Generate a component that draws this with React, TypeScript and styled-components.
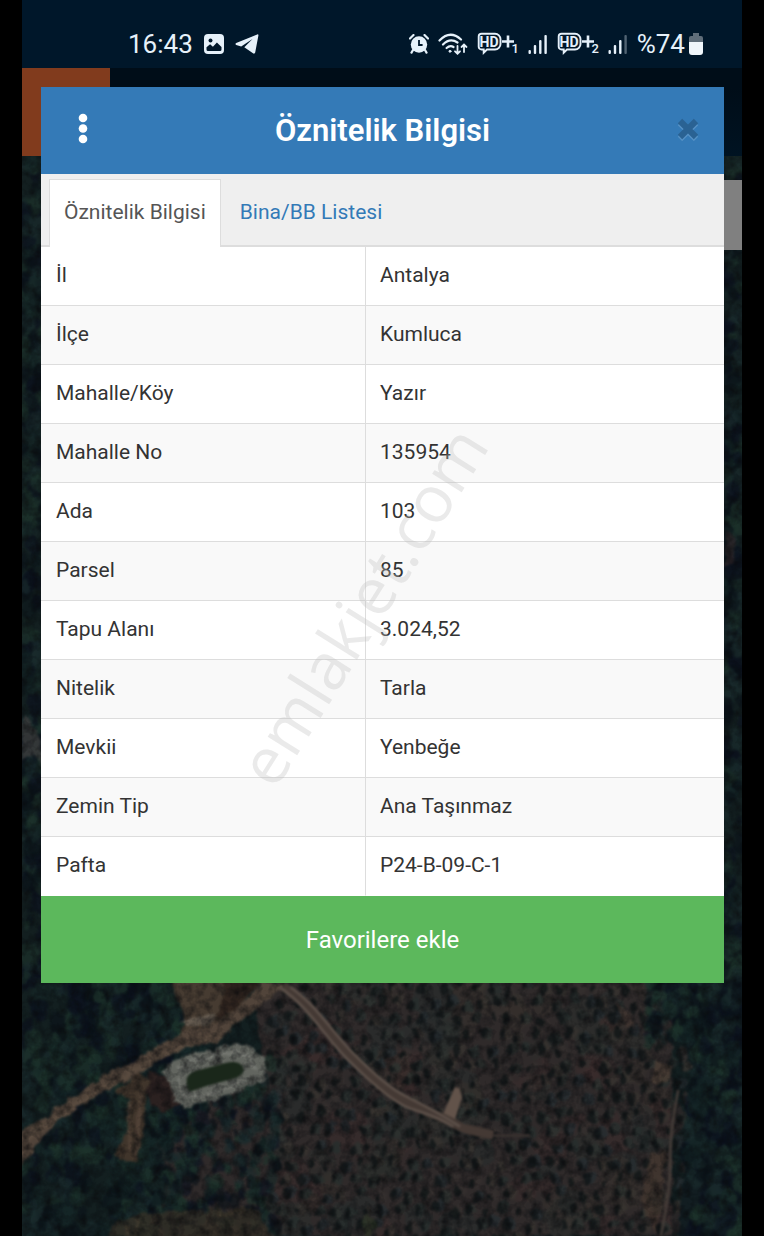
import React, { useState } from "react";
import styled, { createGlobalStyle } from "styled-components";

const GlobalStyle = createGlobalStyle`
  *, *::before, *::after { box-sizing: border-box; }
  body {
    margin: 0;
    background: #000;
    font-family: Roboto, "Liberation Sans", sans-serif;
    color: #333;
  }
  button { font: inherit; border: 0; margin: 0; cursor: pointer; }
`;

const Screen = styled.div`
  position: relative;
  display: flex;
  flex-direction: column;
  min-height: 100vh;
  padding: 0 22px;
  overflow: hidden;
`;

const StatusBar = styled.header`
  display: flex;
  justify-content: space-between;
  align-items: center;
  height: 68px;
  padding: 20px 38px 0 106px;
  background: #00172a;
  color: #e6f1fa;
  font-size: 26px;
  line-height: 32px;
`;

const StatusGroup = styled.div<{ $gap: number }>`
  display: flex;
  align-items: center;
  gap: ${(p) => p.$gap}px;

  svg { display: block; flex: none; }
`;

const Stage = styled.main`
  flex: 1;
  display: grid;
  grid-template-columns: minmax(0, 1fr);
`;

const Backdrop = styled.div`
  grid-area: 1 / 1;
  display: flex;
  flex-direction: column;
`;

const AppHeader = styled.div`
  height: 88px;
  background: linear-gradient(#000d18 0 20px, #001322 100%);
`;

const HeaderTile = styled.div`
  width: 88px;
  height: 88px;
  background: #813b1d;
`;

const MapArea = styled.div`
  position: relative;
  flex: 1;
  background: #0d1719;
  overflow: hidden;
`;

const MapDrawing = styled.svg`
  position: absolute;
  inset: 0;
  width: 100%;
  height: 100%;
`;

const MapControl = styled.div`
  position: absolute;
  top: 24px;
  right: 0;
  width: 70px;
  height: 70px;
  background: #808080;
`;

const Dialog = styled.section`
  grid-area: 1 / 1;
  align-self: start;
  position: relative;
  margin: 19px 18px 24px 19px;
  background: #fff;
`;

const DialogHeader = styled.div`
  display: grid;
  grid-template-columns: 84px 1fr 84px;
  align-items: center;
  height: 87px;
  background: #347ab7;
  color: #fff;
`;

const DialogTitle = styled.h1`
  margin: 0;
  font-size: 31px;
  line-height: 40px;
  font-weight: 600;
  text-align: center;
`;

const IconButton = styled.button<{ $align: "center" | "flex-end" }>`
  display: flex;
  justify-content: ${(p) => p.$align};
  align-items: center;
  height: 100%;
  padding: 0 0 4px;
  padding-right: ${(p) => (p.$align === "center" ? 0 : 25)}px;
  background: none;
  color: inherit;
`;

const Tabs = styled.div`
  display: flex;
  gap: 4px;
  height: 73px;
  padding: 5px 8px 0;
  background: #efefef;
  border-bottom: 2px solid #ddd;
`;

const Tab = styled.button<{ $active: boolean }>`
  padding: 0 14px ${(p) => (p.$active ? 4 : 2)}px;
  margin-bottom: ${(p) => (p.$active ? "-2px" : "0")};
  border: 1px solid ${(p) => (p.$active ? "#ddd" : "transparent")};
  border-bottom: 0;
  background: ${(p) => (p.$active ? "#fff" : "transparent")};
  color: ${(p) => (p.$active ? "#555" : "#337ab7")};
  font-size: 21px;
  line-height: 30px;
`;

const DataTable = styled.table`
  width: 100%;
  border-collapse: separate;
  border-spacing: 0;
  table-layout: fixed;
  font-size: 21px;
  line-height: 30px;
`;

const Row = styled.tr`
  height: 59px;

  &:nth-child(even) { background: #f9f9f9; }
  &:last-child > * { border-bottom-color: #fff; }
`;

const NameCell = styled.th`
  width: 325px;
  padding: 0 14px 2px 15px;
  border-right: 1px solid #ddd;
  border-bottom: 1px solid #ddd;
  font-weight: 400;
  text-align: left;

  @media (max-width: 700px) { width: 48%; }
`;

const ValueCell = styled.td`
  padding: 0 14px 2px;
  border-bottom: 1px solid #ddd;
`;

const FavoriteButton = styled.button`
  display: block;
  width: 100%;
  height: 87px;
  background: #5cb85c;
  color: #fff;
  font-size: 24px;
  line-height: 32px;
`;

const Watermark = styled.div`
  position: absolute;
  top: 50%;
  left: 50%;
  padding-bottom: 48px;
  transform: translate(-50%, -50%) rotate(-58deg);
  font-family: "Open Sans", sans-serif;
  font-size: 65px;
  line-height: 80px;
  white-space: nowrap;
  color: rgba(190, 190, 190, 0.32);
  pointer-events: none;
`;

const PhotoIcon = () => (
  <svg width="20" height="20" viewBox="0 0 20 20" aria-hidden="true">
    <rect width="20" height="20" rx="4" fill="#e6f1fa" />
    <circle cx="6.5" cy="6.5" r="2" fill="#00172a" />
    <path d="M2.5 15.5v-2.2l3.6-3 2.8 2.4 4-4.2 4.6 4.4v2.6q0 1.5-1.5 1.5H4q-1.5 0-1.5-1.5z" fill="#00172a" />
  </svg>
);

const TelegramIcon = () => (
  <svg width="24" height="20" viewBox="0 0 24 20" aria-hidden="true">
    <path
      d="M22.3.4 1.2 9.1c-1 .4-1 1.5 0 1.8l5 1.6L17.5 5 9.3 13.3l8.7 6c1 .7 1.9.3 2.2-.8L23.4 1.6c.2-1-.3-1.5-1.1-1.2z"
      fill="#e6f1fa"
    />
  </svg>
);

const AlarmIcon = () => (
  <svg width="20" height="20" viewBox="0 0 20 20" aria-hidden="true">
    <circle cx="10" cy="10.5" r="8.2" fill="#e6f1fa" />
    <path d="M1 4.5 4.5 1M19 4.5 15.5 1M4 16l-1.500 2.600M16 16l1.500 2.600" stroke="#e6f1fa" strokeWidth="2.200" strokeLinecap="round" />
    <path d="M10 6v5h3.6" stroke="#00172a" strokeWidth="1.8" fill="none" />
  </svg>
);

const WifiIcon = () => (
  <svg width="30" height="22" viewBox="0 0 30 22" fill="none" stroke="#e6f1fa" strokeLinecap="round" aria-hidden="true">
    <path d="M1.500 7.500Q12 -3.500 23 6.500M5 11.500Q12 4.500 19.500 9.500M8.600 15Q12 12 15.500 14" strokeWidth="2.200" />
    <circle cx="12" cy="18.300" r="1" fill="#e6f1fa" strokeWidth="1" />
    <path d="M19.500 13v7.500M17 18.300l2.500 2.400 2.500-2.400M26 19v-7M23.500 14l2.500-2.400 2.500 2.400" strokeWidth="1.800" />
  </svg>
);

const HdIcon = ({ sim }: { sim: string }) => (
  <svg width="42" height="24" viewBox="0 0 42 24" aria-hidden="true">
    <path
      d="M4.500 1.700h13.500a5.500 5.500 0 0 1 5.500 5.500v4.800a5.500 5.500 0 0 1-5.500 5.500h-8L6.700 20.800v-3.300H4.500a2.800 2.800 0 0 1-2.800-2.800V4.500a2.800 2.800 0 0 1 2.800-2.800z"
      fill="none"
      stroke="#e6f1fa"
      strokeWidth="1.900"
    />
    <text x="2.500" y="14.600" fontSize="14" fontWeight="700" fill="#e6f1fa">HD</text>
    <path d="M25 9.500h12M31 3.500v12" stroke="#e6f1fa" strokeWidth="2.600" />
    <text x="34.500" y="21" fontSize="13" fontWeight="500" fill="#e6f1fa">{sim}</text>
  </svg>
);

const SignalIcon = ({ bars }: { bars: number }) => (
  <svg width="20" height="20" viewBox="0 0 20 20" aria-hidden="true">
    {[4, 9, 14, 19].map((h, i) => (
      <rect key={h} x={0.5 + i * 5.3} y={20 - h} width="2.4" height={h} rx="1" fill="#e6f1fa" opacity={i < bars ? 1 : 0.35} />
    ))}
  </svg>
);

const BatteryIcon = () => (
  <svg width="16" height="22" viewBox="0 0 16 22" aria-hidden="true">
    <path d="M5 0h6v3h2a2 2 0 0 1 2 2v4H1V5a2 2 0 0 1 2-2h2z" fill="#5f6d79" />
    <path d="M1 9h14v10a3 3 0 0 1-3 3H4a3 3 0 0 1-3-3z" fill="#f0f6fb" />
  </svg>
);

const MenuDots = () => (
  <svg width="10" height="32" viewBox="0 0 10 32" fill="#fff" aria-hidden="true">
    <circle cx="5" cy="5" r="4.3" />
    <circle cx="5" cy="15.5" r="4.3" />
    <circle cx="5" cy="26" r="4.3" />
  </svg>
);

const CloseIcon = () => (
  <svg width="22" height="24" viewBox="0 0 22 24" fill="none" strokeWidth="6.2" aria-hidden="true">
    <path d="M3 6l16 16M19 6 3 22" stroke="#5591c5" />
    <path d="M3 4l16 16M19 4 3 20" stroke="#2a6293" />
  </svg>
);

/* Repeatable pseudo-random numbers, so the terrain is the same on each load. */
const makeRandom = (seed: number) => () => {
  seed = (seed * 1664525 + 1013904223) % 4294967296;
  return seed / 4294967296;
};

type Tree = { x: number; y: number; r: number; tone: number };

const scatter = (seed: number, count: number, x0: number, y0: number, w: number, h: number, size: number): Tree[] => {
  const rnd = makeRandom(seed);
  return Array.from({ length: count }, () => ({
    x: Math.round(x0 + rnd() * w),
    y: Math.round(y0 + rnd() * h),
    r: Math.round(size * (0.5 + rnd() * 0.9)),
    tone: Math.floor(rnd() * 5),
  }));
};

const orchard = (): Tree[] => {
  const rnd = makeRandom(31);
  const trees: Tree[] = [];
  for (let row = 0; row < 17; row++) {
    for (let col = 0; col < 26; col++) {
      trees.push({
        x: Math.round(245 + col * 17 + (row % 2) * 8 + rnd() * 8 - row * 0.5),
        y: Math.round(826 + row * 16 + rnd() * 9),
        r: 2 + Math.round(rnd() * 2),
        tone: Math.floor(rnd() * 5),
      });
    }
  }
  return trees;
};

const forestTones = ["#0b1318", "#152627", "#1a2b2d", "#1d332b", "#0c121f"];
const crownTones = ["#2d3230", "#272e2d", "#352f2e", "#262d31", "#373330"];
const patchTones = ["#3b2c2b", "#292d2c", "#352f2b", "#2e292a", "#262b2b"];

const leftForest = scatter(7, 420, 0, 815, 180, 265, 9);
const midForest = scatter(19, 260, 125, 905, 130, 175, 6);
const rightForest = scatter(11, 270, 668, 815, 60, 270, 9);
const topRightForest = scatter(23, 80, 625, 815, 55, 70, 7);
const leftEdge = scatter(3, 260, 0, 0, 22, 826, 8);
const rightEdge = scatter(5, 260, 698, 0, 22, 826, 8);
const patches = scatter(41, 130, 250, 815, 400, 265, 16);
const orchardTrees = orchard();

const Forest = ({ trees }: { trees: Tree[] }) => (
  <>
    {trees.map((t, i) => (
      <ellipse key={i} cx={t.x} cy={t.y} rx={t.r * 0.8} ry={t.r * 1.1} fill={forestTones[t.tone]} opacity="0.65" />
    ))}
  </>
);

const Terrain = () => (
  <MapDrawing viewBox="0 0 720 1080" preserveAspectRatio="xMidYMin slice" aria-hidden="true">
    <defs>
      <filter id="soft" x="-5%" y="-5%" width="110%" height="110%" colorInterpolationFilters="sRGB">
        <feGaussianBlur stdDeviation="1.2" />
      </filter>
      <filter id="rough" x="-5%" y="-5%" width="110%" height="110%" colorInterpolationFilters="sRGB">
        <feTurbulence type="fractalNoise" baseFrequency="0.09" numOctaves="3" seed="9" result="noise" />
        <feDisplacementMap in="SourceGraphic" in2="noise" scale="9" xChannelSelector="R" yChannelSelector="G" />
        <feGaussianBlur stdDeviation="1.1" />
      </filter>
      <filter id="grain" x="0" y="0" width="100%" height="100%" colorInterpolationFilters="sRGB">
        <feTurbulence type="fractalNoise" baseFrequency="0.1" numOctaves="3" seed="4" />
        <feColorMatrix values="0 0 0 0 0.030  0 0 0 0 0.035  0 0 0 0 0.045  1.600 0 0 0 -0.620" />
      </filter>
    </defs>
    <rect width="720" height="1080" fill="#131f20" />
    <g filter="url(#rough)">
      <path d="M230 815H650V1080H130V990L170 960 240 900z" fill="#2f2a2a" />
      {patches.map((t, i) => (
        <ellipse key={i} cx={t.x} cy={t.y} rx={t.r} ry={t.r} fill={patchTones[t.tone]} opacity="0.5" />
      ))}
      {orchardTrees.map((t, i) => (
        <g key={i}>
          <ellipse cx={t.x + 4} cy={t.y} rx="5" ry="6" fill={crownTones[t.tone]} opacity="0.8" />
          <ellipse cx={t.x} cy={t.y + 1} rx={t.r} ry={t.r + 2} fill="#121618" opacity="0.85" />
        </g>
      ))}
      <Forest trees={leftForest} />
      <Forest trees={midForest} />
      <path d="M632 815 660 880 672 920 664 1000 656 1080H720V815z" fill="#121d21" />
      <Forest trees={topRightForest} />
      <Forest trees={rightForest} />
      <Forest trees={leftEdge} />
      <Forest trees={rightEdge} />
      <path d="M0 560l6 2 12 24 4 24-10-12-12 8z" fill="#3c3d3d" opacity="0.8" />
      <path d="M702 375l12 6-2 24-10 8z" fill="#30272a" opacity="0.7" />

      <g transform="translate(-2 824) scale(0.3333)">
        <path d="M450 0H720L640 110 590 150 480 180 490 110z" fill="#463b31" />
        <path d="M615 0H730L640 90 595 120z" fill="#30251f" />
        <path d="M480 125l50-15 60-2-20 24-70 12z" fill="#655b50" />
        <path d="M385 270l55 20 40 90-60 20-45-60z" fill="#2b2120" />
        <path d="M0 455 60 425 130 370 220 305 330 250 400 205 500 155 600 125 680 60 730 10H800L740 60 660 125 590 185 500 205 420 240 340 290 240 345 120 420 60 475 40 520 0 560z" fill="#51443a" />
        <path d="M20 470 240 330 410 232 600 160" fill="none" stroke="#5d4e42" strokeWidth="16" opacity="0.7" />
        <path d="M290 330l70-55 24 30-4 80-24 155-50 6-24-20 40-70 6-90z" fill="#40352b" />
        <path d="M325 370v150M362 340 350 530" fill="none" stroke="#54453a" strokeWidth="12" opacity="0.8" />
        <path d="M280 730q80-40 180-36l240-6q40 20 50 90H260z" fill="#352f27" opacity="0.8" />
        <path d="M320 735v33M350 720v48M590 705l90-16" stroke="#4c4233" strokeWidth="12" opacity="0.5" />
        <ellipse cx="1045" cy="735" rx="26" ry="30" fill="#2b3522" opacity="0.5" />
        <path d="M1780 60l60 50 10 40-30-10z" fill="#443832" opacity="0.7" />
        <path d="M1905 240l50 20-6 40-50 6z" fill="#4a3d35" opacity="0.8" />
        <path d="M1890 520l50 0-14 110-14 130-50-90z" fill="#463931" opacity="0.7" />
        <path d="M432 268 465 238 540 212 580 214 590 198 655 192 700 202 735 236 737 296 700 312 640 344 560 366 490 384 468 366 440 300z" fill="#62655f" />
        <path d="M470 262 560 232 640 214 690 232 706 272M482 352 570 344 680 302M478 290l14 60" fill="none" stroke="#767872" strokeWidth="9" />
      </g>
    </g>
    <rect width="720" height="1080" filter="url(#grain)" opacity="0.8" />
    <g filter="url(#soft)">
      <g transform="translate(-2 824) scale(0.3333)">
        <path d="M790 20C880 80 920 160 990 230S1110 340 1150 362 1260 405 1330 445L1420 465" fill="none" stroke="#443934" strokeWidth="28" />
        <path d="M780 22C870 85 910 165 980 235S1110 355 1150 376 1240 400 1300 440" fill="none" stroke="#5c5049" strokeWidth="8" />
        <path d="M812 22C890 75 935 155 1000 220S1110 325 1160 350 1260 400 1320 440" fill="none" stroke="#5c5049" strokeWidth="8" />
        <path d="M1270 400l34-78 14 2 8 28-20 66z" fill="#62534a" />
        <path d="M1420 467H1530" stroke="#38312f" strokeWidth="8" />
        <path d="M1975 330q-26 130-24 210t-28 228" fill="none" stroke="#4a413c" strokeWidth="9" opacity="0.8" />
        <path d="M500 296q4-16 30-24l90-24q44-8 50 18 4 18-24 28l-80 22-54 18q-12-2-12-38z" fill="#1a271a" />
      </g>
    </g>
  </MapDrawing>
);

const records: [string, string][] = [
  ["İl", "Antalya"],
  ["İlçe", "Kumluca"],
  ["Mahalle/Köy", "Yazır"],
  ["Mahalle No", "135954"],
  ["Ada", "103"],
  ["Parsel", "85"],
  ["Tapu Alanı", "3.024,52"],
  ["Nitelik", "Tarla"],
  ["Mevkii", "Yenbeğe"],
  ["Zemin Tip", "Ana Taşınmaz"],
  ["Pafta", "P24-B-09-C-1"],
];

const tabs = ["Öznitelik Bilgisi", "Bina/BB Listesi"];

export default function App() {
  const [active, setActive] = useState(0);

  return (
    <>
      <GlobalStyle />
      <Screen lang="tr">
        <StatusBar>
          <StatusGroup $gap={11}>
            <time>16:43</time>
            <PhotoIcon />
            <TelegramIcon />
          </StatusGroup>
          <StatusGroup $gap={9}>
            <AlarmIcon />
            <WifiIcon />
            <HdIcon sim="1" />
            <SignalIcon bars={4} />
            <HdIcon sim="2" />
            <SignalIcon bars={3} />
            <StatusGroup $gap={3}>
              <span>%74</span>
              <BatteryIcon />
            </StatusGroup>
          </StatusGroup>
        </StatusBar>

        <Stage>
          <Backdrop>
            <AppHeader>
              <HeaderTile />
            </AppHeader>
            <MapArea>
              <Terrain />
              <MapControl />
            </MapArea>
          </Backdrop>

          <Dialog role="dialog" aria-labelledby="dialog-title">
            <DialogHeader>
              <IconButton type="button" aria-label="Menü" $align="center">
                <MenuDots />
              </IconButton>
              <DialogTitle id="dialog-title">Öznitelik Bilgisi</DialogTitle>
              <IconButton type="button" aria-label="Kapat" $align="flex-end">
                <CloseIcon />
              </IconButton>
            </DialogHeader>
            <Tabs role="tablist">
              {tabs.map((label, i) => (
                <Tab
                  key={label}
                  type="button"
                  role="tab"
                  aria-selected={i === active}
                  $active={i === active}
                  onClick={() => setActive(i)}
                >
                  {label}
                </Tab>
              ))}
            </Tabs>
            <DataTable>
              <tbody>
                {records.map(([name, value]) => (
                  <Row key={name}>
                    <NameCell scope="row">{name}</NameCell>
                    <ValueCell>{value}</ValueCell>
                  </Row>
                ))}
              </tbody>
            </DataTable>
            <FavoriteButton type="button">Favorilere ekle</FavoriteButton>
          </Dialog>
        </Stage>
        <Watermark aria-hidden="true">emlakjet.com</Watermark>
      </Screen>
    </>
  );
}
